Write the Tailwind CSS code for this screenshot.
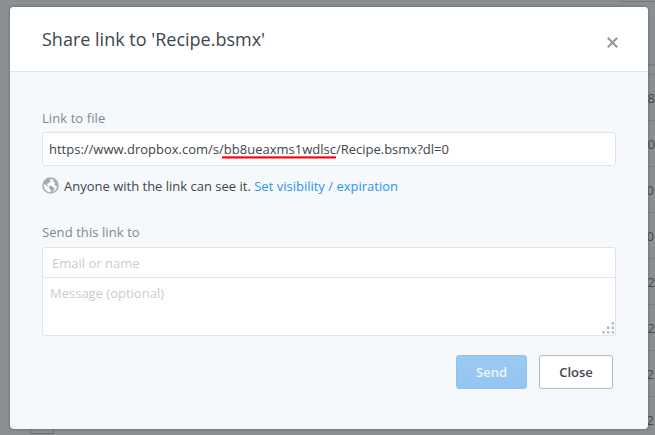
<!DOCTYPE html>
<html lang="en">
<head>
<meta charset="utf-8">
<title>Share link</title>
<script src="https://cdn.jsdelivr.net/npm/@tailwindcss/browser@4"></script>
</head>
<body class="relative h-[435px] w-[655px] overflow-hidden bg-[#8b8f92] font-['Open_Sans','Noto_Sans',sans-serif] text-[13px] text-[#3d464d]">
<!-- Dimmed page behind the dialog -->
<div class="absolute top-[-10px] left-[618px] h-[12px] w-[60px] rounded border border-[#73777a]"></div>
<div class="absolute top-[420px] left-[30px] h-[14px] w-[24px] border border-[#6d7275]"></div>
<div class="absolute top-[64px] right-0 flex w-[12px] flex-col text-[13px] leading-[47px] text-[#3f4a54]">
  <div class="h-[11px] border-t-2 border-b border-[#7d8184]"></div>
  <div class="flex h-[46px] justify-end border-b border-[#7d8184]">:28</div>
  <div class="flex h-[46px] justify-end border-b border-[#7d8184]">:30</div>
  <div class="flex h-[46px] justify-end border-b border-[#7d8184]"><span class="mr-px">:00</span></div>
  <div class="flex h-[46px] justify-end border-b border-[#7d8184]"><span class="mr-px">:00</span></div>
  <div class="flex h-[46px] justify-end border-b border-[#7d8184]">:2</div>
  <div class="flex h-[46px] justify-end border-b border-[#7d8184]">:2</div>
  <div class="flex h-[46px] justify-end border-b border-[#7d8184]"><span class="mr-px">12</span></div>
  <div class="flex h-[46px] justify-end"><span class="mr-px">12</span></div>
</div>
<!-- Dialog -->
<div class="absolute top-[7px] left-[10px] flex h-[422px] w-[638px] flex-col overflow-hidden rounded-[4px] bg-[#f5f9fc] shadow-[0_0_3px_rgba(60,75,85,0.65)]">
  <header class="flex h-[65px] shrink-0 items-center justify-between border-b border-[#e1e3e5] bg-white pr-[30px] pl-8">
    <h1 class="text-[18px] leading-6 text-[#3d464d]">Share link to 'Recipe.bsmx'</h1>
    <svg class="mt-[6px] h-[11px] w-[11px]" viewBox="0 0 11 11" fill="none" stroke="#999" stroke-width="2.2"><path d="M.8.8l9.4 9.4M10.2.8L.8 10.2"/></svg>
  </header>
  <main class="flex flex-col px-8 pt-[36px]">
    <label class="h-[24px] leading-[20px] tracking-[0.08px] text-[#7b8994]">Link to file</label>
    <div class="flex h-[34px] items-center rounded-[3px] border border-[#e1e3e5] bg-white px-[6px] pt-[2px]"><span>https://www.dropbox.com/s/</span><span class="relative">bb8ueaxms1wdlsc<i class="absolute top-[16px] left-[-2px] block h-[3px] w-[114px] border-t border-b border-t-[#ff5a5a] border-b-[#ff8080] bg-[#ff0000]"></i></span><span>/Recipe.bsmx?dl=0</span></div>
    <div class="flex h-[41px] items-center">
      <svg class="mt-[-3px] mr-[5px] h-[17px] w-[17px]" viewBox="0 0 17 17"><circle cx="8.5" cy="8.5" r="7.5" fill="#f9fafb" stroke="#acacac" stroke-width="1.6"/><path fill="#a8a8a8" d="M2.5 4L5.5 1.6 8.8 1.4 8.2 2.8 7.4 3.3 9 4.3 7.2 5.6 6 6.6 4.7 6.8 5.1 7.8 6.4 8.7 5.6 9.2 3.4 8 1.8 6.2ZM7 9L9 8.8 11 10.3 12.7 11 12 13.1 10.2 15 8.9 15.2 8.6 12.6 7 11.1ZM11 2.2L13.5 3.6 15.4 7 15.2 9.6 13.6 8.9 12.5 7.3 13.1 5.7 11.5 4.4Z"/></svg>
      <p>Anyone with the link can see it. <a class="text-[#2f94f0]">Set visibility / expiration</a></p>
    </div>
    <label class="mt-[14px] h-[26px] leading-[22px] tracking-[0.08px] text-[#7b8994]">Send this link to</label>
    <div class="relative flex h-[89px] flex-col rounded-[3px] border border-[#e1e3e5] bg-white text-[#cbcccd]">
      <div class="h-[30px] border-b border-[#e1e3e5] pl-[9px] leading-[30px]">Email or name</div>
      <div class="pl-[7px] leading-[31px]">Message (optional)</div>
      <svg class="absolute right-[1px] bottom-[1px] h-[12px] w-[12px]" viewBox="0 0 12 12" fill="#b5b5b5"><path d="M9.6 0h2.4v2.4h-2.4zM5 4.5h2.4v2.4h-2.4zM9.6 4.5h2.4v2.4h-2.4zM.4 9.2h2.4v2.4h-2.4zM5 9.2h2.4v2.4h-2.4zM9.6 9.2h2.4v2.4h-2.4z"/></svg>
    </div>
    <div class="mt-[19px] flex justify-end gap-3 pr-[3px] font-semibold">
      <button class="h-[34px] w-[71px] rounded-[3px] border border-[#93c1e7] bg-linear-to-b from-[#9bcaf0] to-[#94c5f2] pt-px text-[#eef6fc]">Send</button>
      <button class="h-[34px] w-[74px] rounded-[3px] border border-[#b7b9bb] bg-white pt-px">Close</button>
    </div>
  </main>
</div>
</body>
</html>
